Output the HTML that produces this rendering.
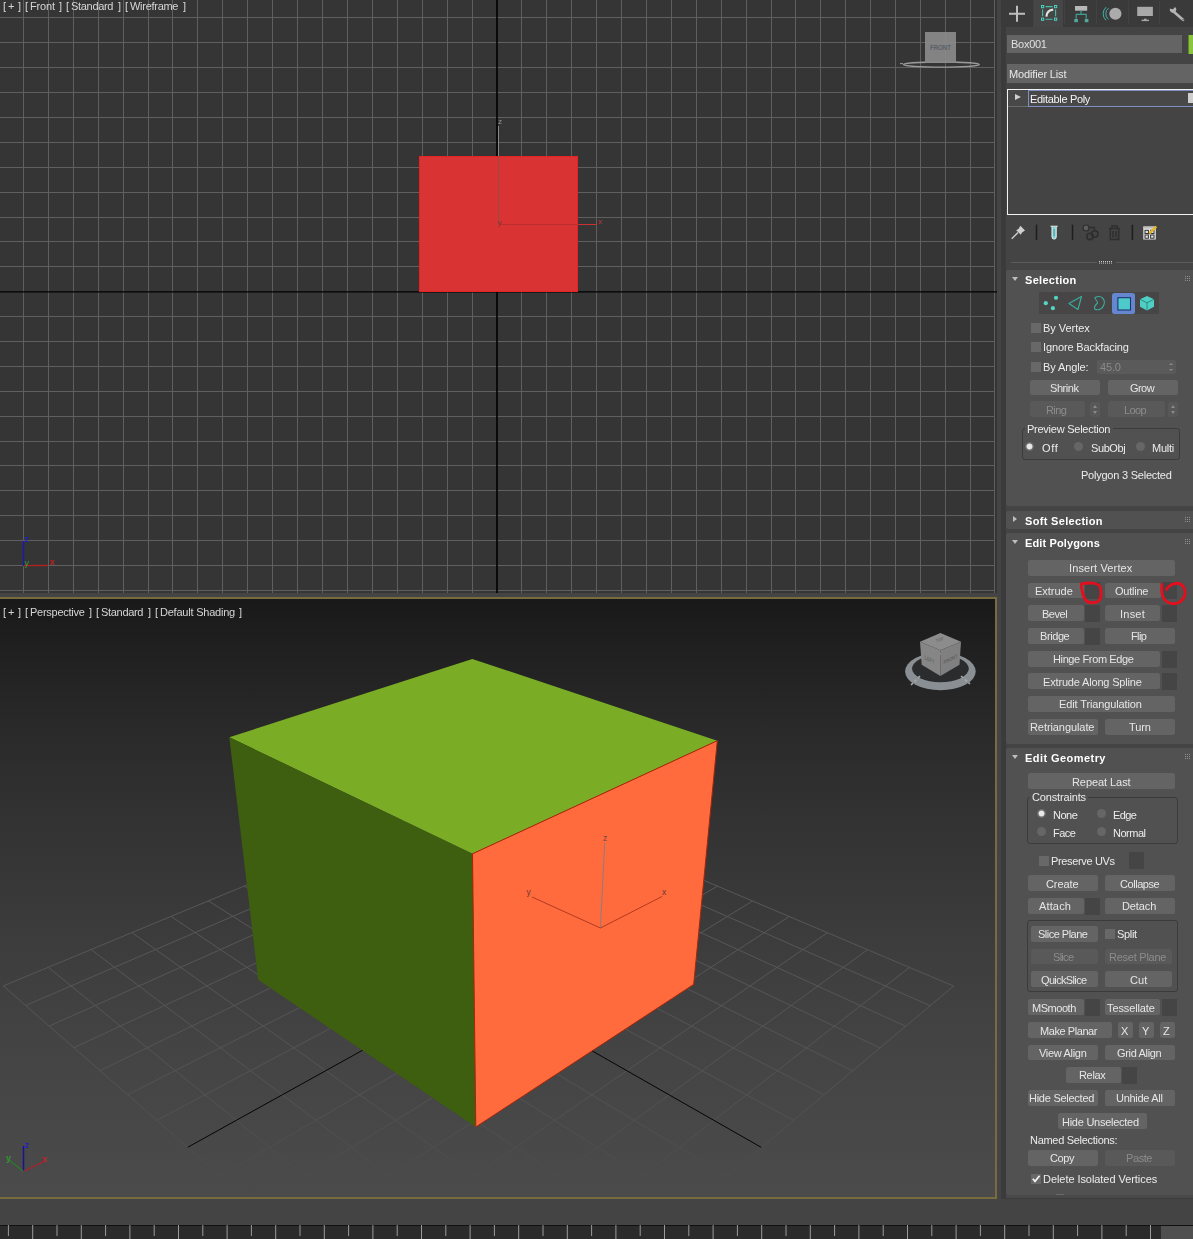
<!DOCTYPE html>
<html><head><meta charset="utf-8"><title>Editable Poly</title>
<style>
*{box-sizing:border-box;margin:0;padding:0}
html,body{width:1193px;height:1239px;overflow:hidden;background:#444}
body{position:relative;font-family:"Liberation Sans",sans-serif;font-size:11px;color:#e6e6e6;line-height:12px}
.abs{position:absolute}
#vp1{position:absolute;left:0;top:0;width:997px;height:593px;background:#353535;overflow:hidden}
#vp2{position:absolute;left:-2px;top:597px;width:999px;height:602px;border:2px solid #786b40;overflow:hidden;background:linear-gradient(#191919 0%,#202020 8.5%,#2c2c2c 25.25%,#353535 42%,#3d3d3d 58.7%,#444444 75.4%,#4b4b4b 100%)}
.t{position:absolute;will-change:transform;white-space:pre;line-height:12px;font-size:11px;color:#ececec}
.roll{position:absolute;left:1006px;width:190px;background:#515151;border-radius:2px 0 0 2px}
.arrd{position:absolute;left:1012.4px;width:0;height:0;border-left:3px solid transparent;border-right:3px solid transparent;border-top:4.6px solid #bdbdbd}
.arrr{position:absolute;left:1013.2px;width:0;height:0;border-top:3px solid transparent;border-bottom:3px solid transparent;border-left:4.6px solid #bdbdbd}
.btn{position:absolute;background:#646464;border-radius:2.5px}
.btn.dis{background:#595959}
.sq{position:absolute;width:15px;height:17px;background:#454545}
.cb{position:absolute;width:10px;height:10px;background:#686868}
.grp{position:absolute;border:1px solid #3b3b3b;border-radius:3px}
.rad{position:absolute;width:9px;height:9px;border-radius:50%;background:#666}
.rad.on{background:radial-gradient(circle,#e8e8e8 0 2.6px,#6a6a6a 3.4px)}
.spin{position:absolute;width:10px;height:15px;background:#585858;border-radius:2px}
.spin:before{content:"";position:absolute;left:2.5px;top:3px;border-left:2.5px solid transparent;border-right:2.5px solid transparent;border-bottom:3px solid #8a8a8a}
.spin:after{content:"";position:absolute;left:2.5px;top:9px;border-left:2.5px solid transparent;border-right:2.5px solid transparent;border-top:3px solid #8a8a8a}
</style></head><body>

<div id="vp1"><svg class="abs" style="left:0;top:0" width="997" height="593" shape-rendering="crispEdges">
<path d="M23.5 0V593M48.5 0V593M73.5 0V593M98.5 0V593M123.5 0V593M148.5 0V593M172.5 0V593M197.5 0V593M222.5 0V593M247.5 0V593M272.5 0V593M297.5 0V593M322.5 0V593M347.5 0V593M372.5 0V593M397.5 0V593M422.5 0V593M447.5 0V593M472.5 0V593M521.5 0V593M546.5 0V593M571.5 0V593M596.5 0V593M621.5 0V593M646.5 0V593M671.5 0V593M696.5 0V593M721.5 0V593M746.5 0V593M771.5 0V593M795.5 0V593M820.5 0V593M845.5 0V593M870.5 0V593M895.5 0V593M920.5 0V593M945.5 0V593M970.5 0V593M994.5 0V593M0 17.5H995M0 42.5H995M0 67.5H995M0 92.5H995M0 117.5H995M0 142.5H995M0 167.5H995M0 192.5H995M0 217.5H995M0 241.5H995M0 266.5H995M0 316.5H995M0 341.5H995M0 366.5H995M0 391.5H995M0 416.5H995M0 441.5H995M0 465.5H995M0 490.5H995M0 515.5H995M0 540.5H995M0 565.5H995M0 590.5H995" stroke="#5f5f5f" stroke-width="1" fill="none"/>
<path d="M497 0V593" stroke="#000" stroke-width="1.6" fill="none" shape-rendering="auto"/><path d="M0 291.9H997" stroke="#000" stroke-width="1.3" fill="none" shape-rendering="auto"/>
<rect x="419.5" y="156.5" width="158" height="135" fill="#d93333" stroke="#e62222" stroke-width="1"/>
</svg>
<svg class="abs" style="left:0;top:0" width="997" height="593">
<path d="M498.5 126V224" stroke="#8d5048" stroke-width="1"/><path d="M498.5 126V156" stroke="#888" stroke-width="1"/>
<path d="M500 224.5H578" stroke="#b83030" stroke-width="1"/><path d="M578 224.5H597" stroke="#c83232" stroke-width="1"/>
<text x="498" y="124" font-size="8" fill="#909090">z</text><text x="497.5" y="225" font-size="8" fill="#7a3535">y</text><text x="598" y="224" font-size="8" fill="#c03636">x</text>
<ellipse cx="941.4" cy="64.6" rx="38" ry="2.6" fill="none" stroke="#9a9a9a" stroke-width="1.3"/>
<path d="M903 63.6h-3" stroke="#9a9a9a" stroke-width="1"/>
<rect x="925" y="32" width="31" height="31" fill="#8a8a8a" fill-opacity=".93"/>
<text x="940.5" y="50.2" font-size="7.5" font-weight="bold" fill="#5a5f66" text-anchor="middle" textLength="21" lengthAdjust="spacingAndGlyphs">FRONT</text>
<path d="M23.5 541V566" stroke="#1a1ab0" stroke-width="1.4"/><path d="M24 565.5H48" stroke="#b02020" stroke-width="1.4"/>
<text x="24.5" y="541.5" font-size="9" font-weight="bold" fill="#2020b8">z</text><text x="24.5" y="565.5" font-size="9" fill="#30a030">y</text><text x="49.5" y="565" font-size="9" font-weight="bold" fill="#b82020">x</text>
</svg>
<div class="t" style="left:2.5px;top:0px;color:#d6d6d6;">[</div>
<div class="t" style="left:18.1px;top:0px;color:#d6d6d6;">]</div>
<div class="t" style="left:7.6px;top:0px;color:#d6d6d6;">+</div>
<div class="t" style="left:25.1px;top:0px;color:#d6d6d6;">[</div>
<div class="t" style="left:58.6px;top:0px;color:#d6d6d6;">]</div>
<div class="t" style="left:29.7px;top:0px;letter-spacing:-0.15px;color:#d6d6d6;">Front</div>
<div class="t" style="left:65.9px;top:0px;color:#d6d6d6;">[</div>
<div class="t" style="left:117.7px;top:0px;color:#d6d6d6;">]</div>
<div class="t" style="left:71.2px;top:0px;letter-spacing:-0.31px;color:#d6d6d6;">Standard</div>
<div class="t" style="left:125.0px;top:0px;color:#d6d6d6;">[</div>
<div class="t" style="left:182.8px;top:0px;color:#d6d6d6;">]</div>
<div class="t" style="left:130.0px;top:0px;letter-spacing:-0.28px;color:#d6d6d6;">Wireframe</div>
</div>
<div id="vp2"><svg class="abs" style="left:0;top:0" width="995" height="598" viewBox="0 599 995 598">
<defs><linearGradient id="gf" gradientUnits="userSpaceOnUse" x1="0" y1="880" x2="0" y2="1197"><stop offset="0" stop-color="#575757"/><stop offset=".4" stop-color="#555555"/><stop offset=".7" stop-color="#525252"/><stop offset=".9" stop-color="#4c4c4c"/><stop offset="1" stop-color="#4b4b4b"/></linearGradient></defs>
<path d="M3.3 985.9L468.4 1393.1M3.3 985.9L483.2 787.0M48.2 967.3L519.3 1350.4M25.6 1005.5L508.7 797.7M91.0 949.5L566.6 1310.7M49.2 1026.1L535.1 808.9M131.9 932.6L610.8 1273.7M73.9 1047.7L562.6 820.6M171.0 916.4L652.1 1239.0M100.0 1070.6L591.1 832.6M208.4 900.9L690.7 1206.6M127.6 1094.7L620.8 845.2M244.1 886.1L727.1 1176.1M156.8 1120.3L651.7 858.3M311.2 858.2L793.5 1120.4M220.4 1176.0L717.5 886.1M342.8 845.2L823.9 1094.9M255.3 1206.5L752.6 901.0M373.1 832.6L852.6 1070.8M292.4 1238.9L789.2 916.5M402.2 820.5L879.9 1047.9M331.9 1273.6L827.5 932.7M430.2 808.9L905.7 1026.3M374.3 1310.7L867.5 949.7M457.2 797.7L930.2 1005.7M419.7 1350.4L909.5 967.4M483.2 787.0L953.6 986.1M468.4 1393.1L953.6 986.1" stroke="url(#gf)" stroke-width="1" fill="none"/>
<path d="M187.7 1147.3L683.9 871.9M278.4 871.9L761.3 1147.4" stroke="#050505" stroke-width="1" fill="none"/>
<polygon points="472.3,658.9 717.3,740.7 472.5,853.8 229.3,737.3" fill="#7aad25"/>
<polygon points="229.3,737.3 472.5,853.8 475.8,1127 258.2,979.8" fill="#3f5f10"/>
<polygon points="472.5,853.8 717.3,740.7 693.7,984.4 475.8,1127" fill="#ff6b3d" stroke="#a82408" stroke-width="1" stroke-linejoin="round"/>
<path d="M600.4 928L604.7 843" stroke="#8a7f7c" stroke-width="1"/>
<path d="M600.4 928L532 897M600.4 928L662 896.5" stroke="#b03a22" stroke-width="1"/>
<text x="603" y="841" font-size="8.5" fill="#6a4a44">z</text><text x="526.5" y="894.5" font-size="8.5" fill="#6a3a30">y</text><text x="662" y="895" font-size="8.5" fill="#6a3a30">x</text>
<ellipse cx="940.4" cy="671.4" rx="35.3" ry="18.9" fill="#8a8f94"/><ellipse cx="940.4" cy="668.6" rx="28.4" ry="13.6" fill="#2b2c2e"/>
<path d="M920 676l-9 9M961 676l9 8" stroke="#a8a8a8" stroke-width="1.6" fill="none" stroke-dasharray="3 2"/>
<polygon points="940.4,632.9 961,641.7 940.4,650.2 920,641.7" fill="#8c8c8c"/>
<polygon points="920,641.7 940.4,650.2 940.4,675.9 921.7,664.8" fill="#868686"/>
<polygon points="961,641.7 940.4,650.2 940.4,675.9 959.5,664.8" fill="#808080"/>
<text x="0" y="0" font-size="5.5" font-weight="bold" fill="#666" transform="translate(924.5,659) skewY(26)" textLength="10" lengthAdjust="spacingAndGlyphs">LEFT</text>
<text x="0" y="0" font-size="5.5" font-weight="bold" fill="#606060" transform="translate(943.5,664.5) skewY(-26)" textLength="14" lengthAdjust="spacingAndGlyphs">FRONT</text>
<text x="0" y="0" font-size="4.5" font-weight="bold" fill="#6c6c6c" transform="translate(936.5,642.5) rotate(-20)" textLength="8" lengthAdjust="spacingAndGlyphs">TOP</text>
<path d="M23.5 1171.5V1146" stroke="#15158f" stroke-width="1.5"/><path d="M23.5 1171.5L45 1161" stroke="#b02030" stroke-width="1.3"/><path d="M23.5 1171.5L9 1160" stroke="#2a7a30" stroke-width="1.3"/>
<text x="24.5" y="1148" font-size="9" font-weight="bold" fill="#2424c0">z</text><text x="6" y="1161" font-size="9" font-weight="bold" fill="#2f962f">y</text><text x="42" y="1162" font-size="9" font-weight="bold" fill="#b82828">x</text>
</svg>
<div class="t" style="left:2.9px;top:7px;color:#d6d6d6;">[</div>
<div class="t" style="left:18.0px;top:7px;color:#d6d6d6;">]</div>
<div class="t" style="left:8.3px;top:7px;color:#d6d6d6;">+</div>
<div class="t" style="left:25.1px;top:7px;color:#d6d6d6;">[</div>
<div class="t" style="left:88.5px;top:7px;color:#d6d6d6;">]</div>
<div class="t" style="left:29.8px;top:7px;letter-spacing:-0.26px;color:#d6d6d6;">Perspective</div>
<div class="t" style="left:95.9px;top:7px;color:#d6d6d6;">[</div>
<div class="t" style="left:147.9px;top:7px;color:#d6d6d6;">]</div>
<div class="t" style="left:101.4px;top:7px;letter-spacing:-0.31px;color:#d6d6d6;">Standard</div>
<div class="t" style="left:154.8px;top:7px;color:#d6d6d6;">[</div>
<div class="t" style="left:239.4px;top:7px;color:#d6d6d6;">]</div>
<div class="t" style="left:160.2px;top:7px;letter-spacing:-0.22px;color:#d6d6d6;">Default Shading</div>
</div>
<div class="abs" style="left:1001.2px;top:0;width:4.8px;height:1198px;background:#3b3b3d"></div>
<div class="abs" style="left:1001.2px;top:0;width:192px;height:26.5px;background:#3a3a3a"></div>
<div class="abs" style="left:1033.2px;top:0;width:30.3px;height:26.5px;background:#464646"></div>
<div class="abs" style="left:1032.7px;top:1px;width:1px;height:24px;background:#424242"></div>
<div class="abs" style="left:1064.2px;top:1px;width:1px;height:24px;background:#424242"></div>
<div class="abs" style="left:1095.8px;top:1px;width:1px;height:24px;background:#424242"></div>
<div class="abs" style="left:1128.1px;top:1px;width:1px;height:24px;background:#424242"></div>
<div class="abs" style="left:1158.9px;top:1px;width:1px;height:24px;background:#424242"></div>
<svg class="abs" style="left:1000px;top:0" width="193" height="30" viewBox="1000 0 193 30">
<path d="M1009 13.75H1025M1017 5.75V21.75" stroke="#bdbdbd" stroke-width="2"/>
<path d="M1045.6 6.6H1052.6M1045.6 19.2H1052.6M1042.6 9.6V16.2M1055.6 9.6V16.2" fill="none" stroke="#43bfae" stroke-width="1.1"/>
<rect x="1041.5" y="5.5" width="2.2" height="2.2" fill="#2c4a46" stroke="#4fd0be" stroke-width="1"/>
<rect x="1054.5" y="5.5" width="2.2" height="2.2" fill="#2c4a46" stroke="#4fd0be" stroke-width="1"/>
<rect x="1041.5" y="18.1" width="2.2" height="2.2" fill="#2c4a46" stroke="#4fd0be" stroke-width="1"/>
<rect x="1054.5" y="18.1" width="2.2" height="2.2" fill="#2c4a46" stroke="#4fd0be" stroke-width="1"/>
<path d="M1046.4 16.6C1046.6 12.4 1049.2 10 1053.2 9.6" fill="none" stroke="#e2e2e2" stroke-width="2.2"/>
<rect x="1075" y="6" width="12.2" height="4.7" fill="#b8b8b8"/>
<path d="M1081 10.7V14.4M1076.2 18.8V14.4H1086.2V18.8" fill="none" stroke="#3f9f93" stroke-width="1.2"/>
<rect x="1074.3" y="19" width="3.6" height="3.2" fill="#55a89c"/><rect x="1084.8" y="19" width="3.6" height="3.2" fill="#55a89c"/>
<path d="M1108.5 8.2A7 7 0 0 0 1108.5 19.3M1106 7.2A9 9 0 0 0 1106 20.3" fill="none" stroke="#3fb5a6" stroke-width="1"/>
<circle cx="1115.4" cy="13.75" r="6.1" fill="#ababab"/>
<rect x="1137.2" y="6.8" width="15.7" height="9.2" fill="#a8a8a8"/><rect x="1141.6" y="19.7" width="7.3" height="1.4" fill="#a8a8a8"/><rect x="1144" y="18.7" width="2.5" height="1.4" fill="#a8a8a8"/>
<path d="M1173.5 11.5L1183 19.8" stroke="#b4b4b4" stroke-width="2.6" stroke-linecap="round"/><path d="M1170 8.5a3.2 3.2 0 1 0 5-1.5l-2 2.3-1.6-.2z" fill="#b4b4b4"/><circle cx="1183" cy="19.8" r=".7" fill="#444"/>
</svg>
<div class="abs" style="left:1007px;top:35px;width:175px;height:18px;background:#646464"></div>
<div class="t" style="left:1011.4px;top:38px;letter-spacing:-0.27px;color:#e0e0e0;">Box001</div>
<div class="abs" style="left:1188px;top:34.5px;width:5px;height:19px;background:#8bc53f;border-left:1px solid #5e8a26"></div>
<div class="abs" style="left:1007px;top:64px;width:186px;height:18.5px;background:#646464"></div>
<div class="t" style="left:1009.3px;top:68px;letter-spacing:-0.15px;color:#e8e8e8;">Modifier List</div>
<div class="abs" style="left:1007px;top:89px;width:190px;height:126px;border:1.4px solid #f2f2f2;background:#444"></div>
<div class="abs" style="left:1008.4px;top:90.4px;width:186px;height:16.2px;background:#484848;border-bottom:1px solid #6a6a6a"></div>
<div class="abs" style="left:1028px;top:90.4px;width:170px;height:16.4px;border:1px solid #7f8fc0"></div>
<div class="abs" style="left:1015px;top:94.2px;width:0;height:0;border-top:3.8px solid transparent;border-bottom:3.8px solid transparent;border-left:6px solid #cfcfcf"></div>
<div class="t" style="left:1029.5px;top:93px;letter-spacing:-0.32px;color:#f4f4f4;">Editable Poly</div>
<div class="abs" style="left:1188px;top:93.4px;width:6px;height:9.2px;background:#cfcfcf"></div>
<svg class="abs" style="left:1005px;top:218px" width="160" height="32" viewBox="1005 218 160 32">
<path d="M1011.7 238.8L1018 232.5" stroke="#d0d0d0" stroke-width="1.3"/><path d="M1016.2 230.2l4.6 4.6 1.2-2.2 3-2.2-4.6-4.6-2 3.2z" fill="#cfcfcf"/>
<path d="M1036.5 224.7V240.1" stroke="#1e1e1e" stroke-width="1.5"/>
<path d="M1072.5 224.7V240.1" stroke="#1e1e1e" stroke-width="1.5"/>
<path d="M1132.4 224.7V240.1" stroke="#1e1e1e" stroke-width="1.5"/>
<path d="M1050.6 226.3H1057.6" stroke="#e8e8e8" stroke-width="1.2"/><path d="M1052 226.8V237a2.1 2.1 0 0 0 4.2 0V226.8" fill="#7fd0d0" stroke="#e8f4f4" stroke-width="1"/><path d="M1054.1 229V236" stroke="#3a8a90" stroke-width=".8"/>
<circle cx="1086" cy="228" r="3" fill="#5c5c5c" stroke="#2e2e2e" stroke-width="1.2"/><circle cx="1090" cy="236.4" r="3.2" fill="none" stroke="#2e2e2e" stroke-width="1.6"/><circle cx="1094.8" cy="234" r="3.2" fill="none" stroke="#2e2e2e" stroke-width="1.6"/><path d="M1089 227.5h5.5v3.5" fill="none" stroke="#2e2e2e" stroke-width="1.3"/>
<path d="M1109 228.5H1120M1112 228v-2h5v2M1110.3 229V239.5H1118.7V229M1113 231V237.5M1116 231V237.5" fill="none" stroke="#2e2e2e" stroke-width="1.5"/>
<rect x="1143.3" y="226.5" width="12.5" height="13" fill="#e4e4e4"/><rect x="1143.3" y="226.5" width="12.5" height="2" fill="#bcbcbc"/>
<rect x="1145" y="230.3" width="3.4" height="3.2" fill="none" stroke="#333" stroke-width="1"/>
<rect x="1150.6" y="230.3" width="3.4" height="3.2" fill="none" stroke="#333" stroke-width="1"/>
<rect x="1145" y="235" width="3.4" height="3.2" fill="none" stroke="#333" stroke-width="1"/>
<rect x="1150.6" y="235" width="3.4" height="3.2" fill="none" stroke="#333" stroke-width="1"/>
<path d="M1149.5 233.3L1156.3 226.5" stroke="#e8b820" stroke-width="2.4"/><path d="M1148.2 234.6l.5-1.8 1.3 1.3z" fill="#333"/>
</svg>
<div class="abs" style="left:1010.5px;top:262px;width:86px;height:1px;background:#5c5c5c"></div><div class="abs" style="left:1116px;top:262px;width:77px;height:1px;background:#5c5c5c"></div>
<svg class="abs" style="left:1099px;top:261px" width="14" height="4"><rect x="0" y="0.0" width="1" height="1" fill="#c8c8c8"/><rect x="0" y="1.6" width="1" height="1" fill="#c8c8c8"/><rect x="2" y="0.0" width="1" height="1" fill="#c8c8c8"/><rect x="2" y="1.6" width="1" height="1" fill="#c8c8c8"/><rect x="4" y="0.0" width="1" height="1" fill="#c8c8c8"/><rect x="4" y="1.6" width="1" height="1" fill="#c8c8c8"/><rect x="6" y="0.0" width="1" height="1" fill="#c8c8c8"/><rect x="6" y="1.6" width="1" height="1" fill="#c8c8c8"/><rect x="8" y="0.0" width="1" height="1" fill="#c8c8c8"/><rect x="8" y="1.6" width="1" height="1" fill="#c8c8c8"/><rect x="10" y="0.0" width="1" height="1" fill="#c8c8c8"/><rect x="10" y="1.6" width="1" height="1" fill="#c8c8c8"/><rect x="12" y="0.0" width="1" height="1" fill="#c8c8c8"/><rect x="12" y="1.6" width="1" height="1" fill="#c8c8c8"/></svg>
<div class="roll" style="top:270.4px;height:236px"></div>
<div class="arrd" style="top:277.0px"></div>
<div class="t" style="left:1025.2px;top:274px;letter-spacing:0.30px;color:#fff;font-weight:bold;">Selection</div>
<svg class="abs" style="left:1185px;top:276px" width="6" height="6"><rect x="0" y="0" width="1" height="1" fill="#8e8e8e"/><rect x="0" y="2" width="1" height="1" fill="#8e8e8e"/><rect x="0" y="4" width="1" height="1" fill="#8e8e8e"/><rect x="2" y="0" width="1" height="1" fill="#8e8e8e"/><rect x="2" y="2" width="1" height="1" fill="#8e8e8e"/><rect x="2" y="4" width="1" height="1" fill="#8e8e8e"/><rect x="4" y="0" width="1" height="1" fill="#8e8e8e"/><rect x="4" y="2" width="1" height="1" fill="#8e8e8e"/><rect x="4" y="4" width="1" height="1" fill="#8e8e8e"/></svg>
<div class="abs" style="left:1039.3px;top:292px;width:119.3px;height:22.4px;background:#474545"></div>
<div class="abs" style="left:1112px;top:292.8px;width:22.5px;height:20.8px;background:#6487cf;border-radius:2.5px"></div>
<svg class="abs" style="left:1039px;top:292px" width="120" height="23" viewBox="1039 292 120 23">
<circle cx="1045.8" cy="303.2" r="2.1" fill="#52d4c4"/>
<circle cx="1056" cy="297.8" r="2.1" fill="#52d4c4"/>
<circle cx="1052.9" cy="308.2" r="2.1" fill="#52d4c4"/>
<path d="M1068.9 303.6L1081.5 296.5L1078 309.4Z" fill="none" stroke="#3bac9f" stroke-width="1.2" stroke-linejoin="round"/>
<path d="M1095 297.5C1101.5 294.5 1105.5 299.5 1104 304.5C1102.8 309 1098 311 1094.6 309C1093.5 307 1096 304.5 1097.5 303C1098 301 1094.5 299.5 1095 297.5Z" fill="none" stroke="#3bac9f" stroke-width="1.1"/>
<rect x="1117.9" y="297.7" width="12.6" height="12.3" fill="#4ecaca" stroke="#1f3570" stroke-width="1.1"/>
<path d="M1147 296L1154 299.3V306.8L1147 310.4L1140 306.8V299.3Z" fill="#4fcfc4"/><path d="M1140 299.3L1147 302.8L1154 299.3M1147 302.8V310.4" fill="none" stroke="#2a8c86" stroke-width="1"/>
</svg>
<div class="cb" style="left:1031.2px;top:323.4px"></div>
<div class="t" style="left:1043.3px;top:322px;letter-spacing:-0.03px;">By Vertex</div>
<div class="cb" style="left:1031.2px;top:342.4px"></div>
<div class="t" style="left:1043.3px;top:341px;letter-spacing:-0.13px;">Ignore Backfacing</div>
<div class="cb" style="left:1031.2px;top:362.2px"></div>
<div class="t" style="left:1043.3px;top:361px;letter-spacing:-0.11px;">By Angle:</div>
<div class="abs" style="left:1097px;top:360px;width:79px;height:14px;background:#5a5a5a;border-radius:2px"></div>
<div class="t" style="left:1100.3px;top:361px;letter-spacing:-0.15px;color:#8a8a8a;">45.0</div>
<div class="abs" style="left:1168.5px;top:363px;width:0;height:0;border-left:2.3px solid transparent;border-right:2.3px solid transparent;border-bottom:2.8px solid #8a8a8a"></div><div class="abs" style="left:1168.5px;top:368.5px;width:0;height:0;border-left:2.3px solid transparent;border-right:2.3px solid transparent;border-top:2.8px solid #8a8a8a"></div>
<div class="btn" style="left:1030.2px;top:379.5px;width:70px;height:15.6px"></div>
<div class="t" style="left:1049.5px;top:382px;letter-spacing:-0.44px;color:#e6e6e6;">Shrink</div>
<div class="btn" style="left:1107.8px;top:379.5px;width:70px;height:15.6px"></div>
<div class="t" style="left:1129.6px;top:382px;letter-spacing:-0.56px;color:#e6e6e6;">Grow</div>
<div class="btn dis" style="left:1030.2px;top:401.3px;width:54.7px;height:15.6px"></div>
<div class="t" style="left:1046.3px;top:404px;letter-spacing:-0.61px;color:#8c8c8c;">Ring</div>
<div class="spin" style="left:1090.2px;top:401.5px"></div>
<div class="btn dis" style="left:1107.8px;top:401.3px;width:57px;height:15.6px"></div>
<div class="t" style="left:1124.3px;top:404px;letter-spacing:-0.63px;color:#8c8c8c;">Loop</div>
<div class="spin" style="left:1168.2px;top:401.5px"></div>
<div class="grp" style="left:1021.5px;top:428.2px;width:158px;height:32px"></div>
<div class="abs" style="left:1024.5px;top:426px;width:88px;height:6px;background:#515151"></div>
<div class="t" style="left:1026.5px;top:423px;letter-spacing:-0.25px;">Preview Selection</div>
<div class="rad on" style="left:1024.9px;top:442.0px"></div>
<div class="t" style="left:1041.6px;top:442px;letter-spacing:0.71px;">Off</div>
<div class="rad" style="left:1074.0px;top:442.0px"></div>
<div class="t" style="left:1090.7px;top:442px;letter-spacing:-0.40px;">SubObj</div>
<div class="rad" style="left:1136.0px;top:442.0px"></div>
<div class="t" style="left:1152.3px;top:442px;letter-spacing:-0.28px;">Multi</div>
<div class="t" style="left:1081.3px;top:469px;letter-spacing:-0.23px;">Polygon 3 Selected</div>
<div class="roll" style="top:511px;height:18.2px"></div>
<div class="arrr" style="top:515.6px"></div>
<div class="t" style="left:1025.2px;top:515px;letter-spacing:0.32px;color:#fff;font-weight:bold;">Soft Selection</div>
<svg class="abs" style="left:1185px;top:517px" width="6" height="6"><rect x="0" y="0" width="1" height="1" fill="#8e8e8e"/><rect x="0" y="2" width="1" height="1" fill="#8e8e8e"/><rect x="0" y="4" width="1" height="1" fill="#8e8e8e"/><rect x="2" y="0" width="1" height="1" fill="#8e8e8e"/><rect x="2" y="2" width="1" height="1" fill="#8e8e8e"/><rect x="2" y="4" width="1" height="1" fill="#8e8e8e"/><rect x="4" y="0" width="1" height="1" fill="#8e8e8e"/><rect x="4" y="2" width="1" height="1" fill="#8e8e8e"/><rect x="4" y="4" width="1" height="1" fill="#8e8e8e"/></svg>
<div class="roll" style="top:533.3px;height:210.5px"></div>
<div class="arrd" style="top:539.9px"></div>
<div class="t" style="left:1025.2px;top:537px;letter-spacing:0.12px;color:#fff;font-weight:bold;">Edit Polygons</div>
<svg class="abs" style="left:1185px;top:539px" width="6" height="6"><rect x="0" y="0" width="1" height="1" fill="#8e8e8e"/><rect x="0" y="2" width="1" height="1" fill="#8e8e8e"/><rect x="0" y="4" width="1" height="1" fill="#8e8e8e"/><rect x="2" y="0" width="1" height="1" fill="#8e8e8e"/><rect x="2" y="2" width="1" height="1" fill="#8e8e8e"/><rect x="2" y="4" width="1" height="1" fill="#8e8e8e"/><rect x="4" y="0" width="1" height="1" fill="#8e8e8e"/><rect x="4" y="2" width="1" height="1" fill="#8e8e8e"/><rect x="4" y="4" width="1" height="1" fill="#8e8e8e"/></svg>
<div class="btn" style="left:1028px;top:560px;width:147.2px;height:15.6px"></div>
<div class="t" style="left:1068.8px;top:562px;letter-spacing:0.13px;color:#e6e6e6;">Insert Vertex</div>
<div class="btn" style="left:1028px;top:582.5px;width:55.5px;height:15.6px"></div>
<div class="t" style="left:1035.2px;top:585px;letter-spacing:-0.01px;color:#e6e6e6;">Extrude</div>
<div class="sq" style="left:1084.5px;top:582px"></div>
<div class="btn" style="left:1105px;top:582.5px;width:55.5px;height:15.6px"></div>
<div class="t" style="left:1114.5px;top:585px;letter-spacing:-0.23px;color:#e6e6e6;">Outline</div>
<div class="sq" style="left:1161.5px;top:582px"></div>
<div class="btn" style="left:1028px;top:605.3px;width:55.5px;height:15.6px"></div>
<div class="t" style="left:1041.6px;top:608px;letter-spacing:-0.48px;color:#e6e6e6;">Bevel</div>
<div class="sq" style="left:1084.5px;top:605px"></div>
<div class="btn" style="left:1105px;top:605.3px;width:55.2px;height:15.6px"></div>
<div class="t" style="left:1119.9px;top:608px;letter-spacing:0.23px;color:#e6e6e6;">Inset</div>
<div class="sq" style="left:1161.5px;top:605px"></div>
<div class="btn" style="left:1028px;top:628.2px;width:55.5px;height:15.6px"></div>
<div class="t" style="left:1039.6px;top:630px;letter-spacing:-0.42px;color:#e6e6e6;">Bridge</div>
<div class="sq" style="left:1084.5px;top:628px"></div>
<div class="btn" style="left:1105px;top:628.2px;width:70.2px;height:15.6px"></div>
<div class="t" style="left:1131.3px;top:630px;letter-spacing:-0.61px;color:#e6e6e6;">Flip</div>
<div class="btn" style="left:1028px;top:651px;width:132px;height:15.6px"></div>
<div class="t" style="left:1052.5px;top:653px;letter-spacing:-0.38px;color:#e6e6e6;">Hinge From Edge</div>
<div class="sq" style="left:1161.5px;top:650.5px"></div>
<div class="btn" style="left:1028px;top:673.2px;width:132px;height:15.6px"></div>
<div class="t" style="left:1043.2px;top:676px;letter-spacing:-0.17px;color:#e6e6e6;">Extrude Along Spline</div>
<div class="sq" style="left:1161.5px;top:673px"></div>
<div class="btn" style="left:1028px;top:696.2px;width:147.2px;height:15.6px"></div>
<div class="t" style="left:1059.2px;top:698px;letter-spacing:-0.12px;color:#e6e6e6;">Edit Triangulation</div>
<div class="btn" style="left:1028px;top:719px;width:70.3px;height:15.6px"></div>
<div class="t" style="left:1029.5px;top:721px;letter-spacing:-0.08px;color:#e6e6e6;">Retriangulate</div>
<div class="btn" style="left:1105px;top:719px;width:70.2px;height:15.6px"></div>
<div class="t" style="left:1128.5px;top:721px;letter-spacing:-0.14px;color:#e6e6e6;">Turn</div>
<svg class="abs" style="left:1075px;top:575px" width="118" height="35" viewBox="1075 575 118 35">
<path d="M1081.3 585.5C1082 590 1082.5 596 1085.5 600C1088.5 603.5 1095 603.5 1098.5 601C1101.8 598 1101.8 590 1099.5 586C1097 582.5 1088 582.5 1081.5 583.8" fill="none" stroke="#e20f1e" stroke-width="2.9" stroke-linecap="round"/>
<path d="M1166.5 589.5C1168 586 1173 583 1178 583.2C1183 584 1185.6 589 1185 594C1184 600 1179 604 1173.5 603.8C1167.5 603.5 1163.5 599.5 1162.2 594.5C1161.5 590.5 1161.5 587 1162 584.5" fill="none" stroke="#e20f1e" stroke-width="2.9" stroke-linecap="round"/>
</svg>
<div class="roll" style="top:748px;height:447.3px"></div>
<div class="arrd" style="top:754.6px"></div>
<div class="t" style="left:1025.2px;top:752px;letter-spacing:0.44px;color:#fff;font-weight:bold;">Edit Geometry</div>
<svg class="abs" style="left:1185px;top:754px" width="6" height="6"><rect x="0" y="0" width="1" height="1" fill="#8e8e8e"/><rect x="0" y="2" width="1" height="1" fill="#8e8e8e"/><rect x="0" y="4" width="1" height="1" fill="#8e8e8e"/><rect x="2" y="0" width="1" height="1" fill="#8e8e8e"/><rect x="2" y="2" width="1" height="1" fill="#8e8e8e"/><rect x="2" y="4" width="1" height="1" fill="#8e8e8e"/><rect x="4" y="0" width="1" height="1" fill="#8e8e8e"/><rect x="4" y="2" width="1" height="1" fill="#8e8e8e"/><rect x="4" y="4" width="1" height="1" fill="#8e8e8e"/></svg>
<div class="btn" style="left:1028px;top:773.3px;width:147.2px;height:15.6px"></div>
<div class="t" style="left:1071.5px;top:776px;letter-spacing:-0.07px;color:#e6e6e6;">Repeat Last</div>
<div class="grp" style="left:1026.5px;top:796.5px;width:151.5px;height:47.5px"></div>
<div class="abs" style="left:1030px;top:794px;width:58px;height:6px;background:#515151"></div>
<div class="t" style="left:1031.9px;top:791px;letter-spacing:-0.16px;">Constraints</div>
<div class="rad on" style="left:1036.8px;top:809.1px"></div>
<div class="t" style="left:1053.4px;top:809px;letter-spacing:-0.50px;">None</div>
<div class="rad" style="left:1097.1px;top:809.1px"></div>
<div class="t" style="left:1113.4px;top:809px;letter-spacing:-0.64px;">Edge</div>
<div class="rad" style="left:1036.8px;top:827.3px"></div>
<div class="t" style="left:1053.4px;top:827px;letter-spacing:-0.49px;">Face</div>
<div class="rad" style="left:1097.1px;top:827.3px"></div>
<div class="t" style="left:1113.4px;top:827px;letter-spacing:-0.49px;">Normal</div>
<div class="cb" style="left:1039.1px;top:856px"></div>
<div class="t" style="left:1051.3px;top:855px;letter-spacing:-0.35px;">Preserve UVs</div>
<div class="sq" style="left:1129.2px;top:852px;height:17.3px"></div>
<div class="btn" style="left:1028px;top:875.3px;width:70.3px;height:15.6px"></div>
<div class="t" style="left:1045.5px;top:878px;letter-spacing:-0.07px;color:#e6e6e6;">Create</div>
<div class="btn" style="left:1105px;top:875.3px;width:70.2px;height:15.6px"></div>
<div class="t" style="left:1119.6px;top:878px;letter-spacing:-0.44px;color:#e6e6e6;">Collapse</div>
<div class="btn" style="left:1028px;top:898px;width:55.5px;height:15.6px"></div>
<div class="t" style="left:1038.5px;top:900px;letter-spacing:0.14px;color:#e6e6e6;">Attach</div>
<div class="sq" style="left:1084.5px;top:897.5px"></div>
<div class="btn" style="left:1105px;top:898px;width:70.2px;height:15.6px"></div>
<div class="t" style="left:1122.1px;top:900px;letter-spacing:-0.10px;color:#e6e6e6;">Detach</div>
<div class="grp" style="left:1026.5px;top:919.5px;width:151.5px;height:72.8px"></div>
<div class="btn" style="left:1031.2px;top:926.2px;width:67.1px;height:15.6px"></div>
<div class="t" style="left:1038.2px;top:928px;letter-spacing:-0.51px;color:#e6e6e6;">Slice Plane</div>
<div class="cb" style="left:1105px;top:929px"></div>
<div class="t" style="left:1117.4px;top:928px;letter-spacing:-0.33px;">Split</div>
<div class="btn dis" style="left:1031.2px;top:948.6px;width:67.1px;height:15.6px"></div>
<div class="t" style="left:1053.3px;top:951px;letter-spacing:-0.71px;color:#8c8c8c;">Slice</div>
<div class="btn dis" style="left:1105px;top:948.6px;width:67px;height:15.6px"></div>
<div class="t" style="left:1109.0px;top:951px;letter-spacing:-0.25px;color:#8c8c8c;">Reset Plane</div>
<div class="btn" style="left:1031.2px;top:971.3px;width:67.1px;height:15.6px"></div>
<div class="t" style="left:1040.8px;top:974px;letter-spacing:-0.65px;color:#e6e6e6;">QuickSlice</div>
<div class="btn" style="left:1105px;top:971.3px;width:67px;height:15.6px"></div>
<div class="t" style="left:1129.6px;top:974px;letter-spacing:0.09px;color:#e6e6e6;">Cut</div>
<div class="btn" style="left:1028px;top:999.2px;width:55.5px;height:15.6px"></div>
<div class="t" style="left:1032.0px;top:1002px;letter-spacing:-0.47px;color:#e6e6e6;">MSmooth</div>
<div class="sq" style="left:1084.5px;top:998.7px"></div>
<div class="btn" style="left:1105px;top:999.2px;width:55.2px;height:15.6px"></div>
<div class="t" style="left:1107.3px;top:1002px;letter-spacing:-0.12px;color:#e6e6e6;">Tessellate</div>
<div class="sq" style="left:1161.5px;top:998.7px"></div>
<div class="btn" style="left:1028px;top:1022.3px;width:84.4px;height:15.6px"></div>
<div class="t" style="left:1040.2px;top:1025px;letter-spacing:-0.43px;color:#e6e6e6;">Make Planar</div>
<div class="btn" style="left:1118.4px;top:1022.3px;width:14.6px;height:15.6px"></div>
<div class="t" style="left:1120.5px;top:1025px;color:#e6e6e6;">X</div>
<div class="btn" style="left:1139.2px;top:1022.3px;width:14.8px;height:15.6px"></div>
<div class="t" style="left:1141.9px;top:1025px;color:#e6e6e6;">Y</div>
<div class="btn" style="left:1160.2px;top:1022.3px;width:15px;height:15.6px"></div>
<div class="t" style="left:1162.9px;top:1025px;color:#e6e6e6;">Z</div>
<div class="btn" style="left:1028px;top:1044.5px;width:70.3px;height:15.6px"></div>
<div class="t" style="left:1038.6px;top:1047px;letter-spacing:-0.31px;color:#e6e6e6;">View Align</div>
<div class="btn" style="left:1105px;top:1044.5px;width:70.2px;height:15.6px"></div>
<div class="t" style="left:1116.6px;top:1047px;letter-spacing:-0.34px;color:#e6e6e6;">Grid Align</div>
<div class="btn" style="left:1066.4px;top:1067px;width:54.8px;height:15.6px"></div>
<div class="t" style="left:1079.3px;top:1069px;letter-spacing:-0.33px;color:#e6e6e6;">Relax</div>
<div class="sq" style="left:1122px;top:1066.5px"></div>
<div class="btn" style="left:1028px;top:1090px;width:70.3px;height:15.6px"></div>
<div class="t" style="left:1029.0px;top:1092px;letter-spacing:-0.26px;color:#e6e6e6;">Hide Selected</div>
<div class="btn" style="left:1105px;top:1090px;width:70.2px;height:15.6px"></div>
<div class="t" style="left:1115.5px;top:1092px;letter-spacing:-0.29px;color:#e6e6e6;">Unhide All</div>
<div class="btn" style="left:1057.5px;top:1113.2px;width:89.4px;height:15.6px"></div>
<div class="t" style="left:1062.2px;top:1116px;letter-spacing:-0.26px;color:#e6e6e6;">Hide Unselected</div>
<div class="t" style="left:1029.5px;top:1134px;letter-spacing:-0.30px;">Named Selections:</div>
<div class="btn" style="left:1028px;top:1150.2px;width:70.3px;height:15.6px"></div>
<div class="t" style="left:1049.7px;top:1152px;letter-spacing:-0.36px;color:#e6e6e6;">Copy</div>
<div class="btn dis" style="left:1105px;top:1150.2px;width:70.2px;height:15.6px"></div>
<div class="t" style="left:1125.5px;top:1152px;letter-spacing:-0.41px;color:#8c8c8c;">Paste</div>
<div class="cb" style="left:1031.2px;top:1174px"></div>
<svg class="abs" style="left:1031.2px;top:1174px" width="10" height="10"><path d="M1.8 4.8L4 7.4L8.6 1.8" fill="none" stroke="#f4f4f4" stroke-width="1.7"/></svg>
<div class="t" style="left:1043.3px;top:1173px;letter-spacing:-0.06px;">Delete Isolated Vertices</div>
<div class="abs" style="left:1056px;top:1193.6px;width:8px;height:1px;background:#6a6a6a"></div>
<div class="abs" style="left:1006px;top:1195.3px;width:187px;height:2.4px;background:#494949"></div>
<div class="abs" style="left:1001px;top:1197.6px;width:192px;height:1.6px;background:#3c3c3c"></div>
<div class="abs" style="left:0;top:1199px;width:1193px;height:25.5px;background:#444"></div>
<div class="abs" style="left:0;top:1224.5px;width:1161px;height:15px;background:#2b2b2b;border-top:1.5px solid #111"></div>
<div class="abs" style="left:1161px;top:1224.5px;width:32px;height:15px;background:#4f4f4f;border-top:1.5px solid #111"></div>
<svg class="abs" style="left:0;top:1225px" width="1161" height="14">
<path d="M8.4 0V11M32.7 0V14M57.0 0V11M81.3 0V14M105.6 0V11M129.9 0V14M154.2 0V11M178.5 0V14M202.8 0V11M227.1 0V14M251.4 0V11M275.7 0V14M300.0 0V11M324.3 0V14M348.6 0V11M372.9 0V14M397.2 0V11M421.5 0V14M445.8 0V11M470.1 0V14M494.4 0V11M518.7 0V14M543.0 0V11M567.3 0V14M591.6 0V11M615.9 0V14M640.2 0V11M664.5 0V14M688.8 0V11M713.1 0V14M737.4 0V11M761.7 0V14M786.0 0V11M810.3 0V14M834.6 0V11M858.9 0V14M883.2 0V11M907.5 0V14M931.8 0V11M956.1 0V14M980.4 0V11M1004.7 0V14M1029.0 0V11M1053.3 0V14M1077.6 0V11M1101.9 0V14M1126.2 0V11M1150.5 0V14" stroke="#9a9a9a" stroke-width="1"/>
</svg>
</body></html>
